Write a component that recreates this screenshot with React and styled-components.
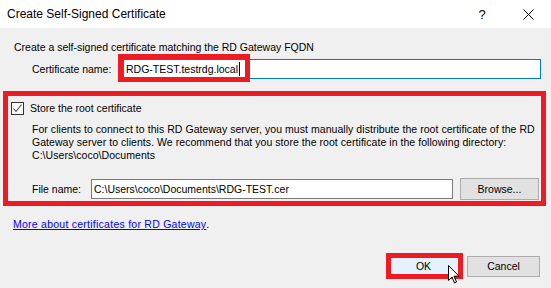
import styled, { createGlobalStyle } from "styled-components"

const Global = createGlobalStyle`
  html, body {
    margin: 0;
    padding: 0;
    background: #f0f0f0;
    overflow: hidden;
  }
`

const Win = styled.div`
  width: 551px;
  height: 288px;
  background: #f0f0f0;
  display: flex;
  flex-direction: column;
  font-family: "Liberation Sans", Arial, sans-serif;
  font-size: 10.5px;
  line-height: 13px;
  color: #000;
  position: relative;
`

const TitleBar = styled.div`
  height: 28px;
  flex: none;
  background: #fff;
  display: flex;
  align-items: center;
  padding-left: 7px;
`

const Title = styled.div`
  font-size: 12px;
  flex: 1;
`

const TitleBtn = styled.div`
  width: ${p => p.w}px;
  display: flex;
  justify-content: center;
  align-items: center;
  font-size: 13px;
`

const Intro = styled.div`
  margin: 13px 0 0 14px;
  white-space: nowrap;
`

const FieldRow = styled.div`
  display: flex;
  align-items: center;
  margin: ${p => p.m};
  padding-left: ${p => p.pl}px;
`

const Label = styled.div`
  width: ${p => p.w}px;
  flex: none;
  white-space: nowrap;
`

const InputWrap = styled.div`
  position: relative;
  flex: none;
`

const TextBox = styled.div`
  box-sizing: border-box;
  width: ${p => p.w}px;
  height: 20px;
  background: #fff;
  border: 1px solid ${p => (p.focus ? "#0078d7" : "#7a7a7a")};
  padding-left: 2px;
  display: flex;
  align-items: center;
  white-space: nowrap;
`

const Caret = styled.span`
  display: inline-block;
  width: 1px;
  height: 14px;
  background: #000;
  margin-left: 1px;
`

const Marker = styled.div`
  position: absolute;
  left: ${p => p.l}px;
  top: ${p => p.t}px;
  width: ${p => p.w}px;
  height: ${p => p.h}px;
  box-sizing: border-box;
  border: 5px solid #ed1c24;
  pointer-events: none;
`

const Group = styled.div`
  box-sizing: border-box;
  margin: 12px 0 0 3px;
  width: 543px;
  height: 115px;
  border: 5px solid #ed1c24;
  display: flex;
  flex-direction: column;
`

const CheckRow = styled.div`
  display: flex;
  align-items: center;
  margin: 6px 0 0 3px;
  gap: 6px;
`

const Check = styled.div`
  box-sizing: border-box;
  width: 13px;
  height: 13px;
  border: 1px solid #333;
  background: #fff;
  display: flex;
  align-items: center;
  justify-content: center;
`

const Para = styled.div`
  margin: 8px 0 0 24px;
  white-space: nowrap;
  letter-spacing: 0.05px;
`

const Button = styled.div`
  box-sizing: border-box;
  width: ${p => p.w}px;
  height: ${p => p.h || 21}px;
  margin-left: ${p => p.ml || 0}px;
  background: ${p => (p.hover ? "#e5f1fb" : "#e1e1e1")};
  border: 1px solid ${p => (p.hover ? "#0078d7" : "#adadad")};
  display: flex;
  align-items: center;
  justify-content: center;
  flex: none;
  position: relative;
`

const LinkLine = styled.div`
  margin: 12px 0 0 13px;
`

const Link = styled.span`
  color: #0000ff;
  text-decoration: underline;
  letter-spacing: 0.25px;
`

const Footer = styled.div`
  display: flex;
  justify-content: flex-end;
  gap: 7px;
  margin-top: auto;
  padding: 0 11px 11px 0;
`

const Cursor = styled.svg`
  position: absolute;
  left: 448px;
  top: 265px;
`

const App = () => {
  return (
    <Win>
      <Global />
      <TitleBar>
        <Title>Create Self-Signed Certificate</Title>
        <TitleBtn w={46}>?</TitleBtn>
        <TitleBtn w={46}>
          <svg width="11" height="11" viewBox="0 0 11 11">
            <path d="M0.5 0.5 L10.5 10.5 M10.5 0.5 L0.5 10.5" stroke="#000" strokeWidth="1" fill="none" />
          </svg>
        </TitleBtn>
      </TitleBar>

      <Intro>Create a self-signed certificate matching the RD Gateway FQDN</Intro>

      <FieldRow m="5px 0 0 0" pl={32}>
        <Label w={91}>Certificate name:</Label>
        <InputWrap>
          <TextBox w={418} focus>
            RDG-TEST.testrdg.local<Caret />
          </TextBox>
          <Marker l={-5} t={-5} w={132} h={28} />
        </InputWrap>
      </FieldRow>

      <Group>
        <CheckRow>
          <Check>
            <svg width="11" height="11" viewBox="0 0 11 11">
              <path d="M1.5 5.5 L4 8.5 L9.5 1.5" stroke="#444" strokeWidth="1.1" fill="none" />
            </svg>
          </Check>
          <span>Store the root certificate</span>
        </CheckRow>
        <Para>
          For clients to connect to this RD Gateway server, you must manually distribute the root certificate of the RD
          <br />
          Gateway server to clients. We recommend that you store the root certificate in the following directory:
          <br />
          C:\Users\coco\Documents
        </Para>
        <FieldRow m="16px 0 0 0" pl={24}>
          <Label w={59}>File name:</Label>
          <TextBox w={362}>C:\Users\coco\Documents\RDG-TEST.cer</TextBox>
          <Button w={79} h={22} ml={7}>Browse...</Button>
        </FieldRow>
      </Group>

      <LinkLine>
        <Link>More about certificates for RD Gateway</Link>.
      </LinkLine>

      <Footer>
        <Button w={73} hover>
          OK
          <Marker l={-2} t={-4} w={77} h={26} />
        </Button>
        <Button w={73}>Cancel</Button>
      </Footer>

      <Cursor width="12" height="19" viewBox="0 0 12 19">
        <path d="M0.5 0.5 L0.5 15.5 L4 12 L6.5 18 L8.5 17 L6 11.2 L11 11.2 Z" fill="#fff" stroke="#000" strokeWidth="1" />
      </Cursor>
    </Win>
  )
}

export default App
